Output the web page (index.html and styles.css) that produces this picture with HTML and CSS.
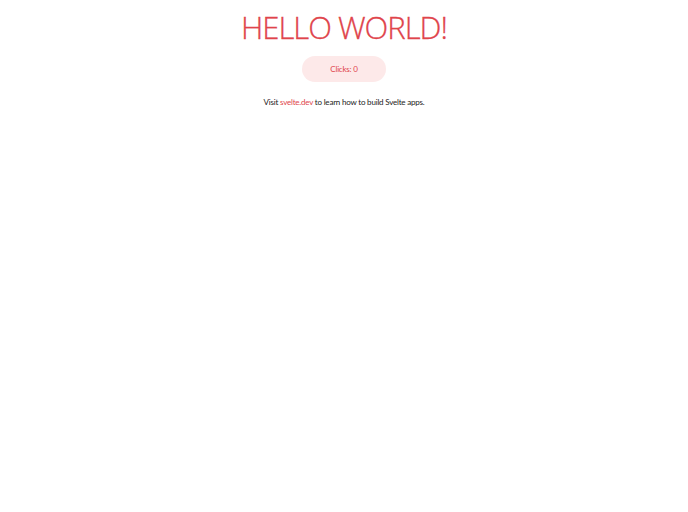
FILE: index.html
```html
<!DOCTYPE html>
<html>
<head>
<meta charset="utf-8">
<link rel="stylesheet" href="styles.css">
</head>
<body>
<main class="app">
  <h1 class="title">Hello world!</h1>
  <button class="counter">Clicks: 0</button>
  <p class="visit">Visit <a class="link" href="#">svelte.dev</a> to learn how to build Svelte apps.</p>
</main>
</body>
</html>
```
FILE: styles.css
```css
html, body {
  margin: 0;
  padding: 0;
  background: #fff;
}
body {
  font-family: Lato, "Noto Sans", sans-serif;
  color: #222;
}
.app {
  display: flex;
  flex-direction: column;
  align-items: center;
  text-align: center;
  padding-top: 8px;
}
.title {
  margin: 0;
  color: #e0444b;
  font-family: "Open Sans", "Noto Sans", sans-serif;
  font-size: 31px;
  font-weight: 300;
  text-transform: uppercase;
  line-height: 38px;
  letter-spacing: -1px;
  -webkit-text-stroke: 0.3px #e0444b;
}
.counter {
  margin-top: 10px;
  width: 84px;
  height: 26px;
  border: none;
  border-radius: 13px;
  background: #fde9e9;
  color: #e0444b;
  font-family: inherit;
  font-size: 8px;
  letter-spacing: -0.2px;
  padding: 0;
}
.visit {
  margin: 12px 0 0;
  font-size: 8px;
  line-height: 16px;
  letter-spacing: -0.2px;
  color: #222;
}
.link {
  color: #e0444b;
  text-decoration: none;
}
```
